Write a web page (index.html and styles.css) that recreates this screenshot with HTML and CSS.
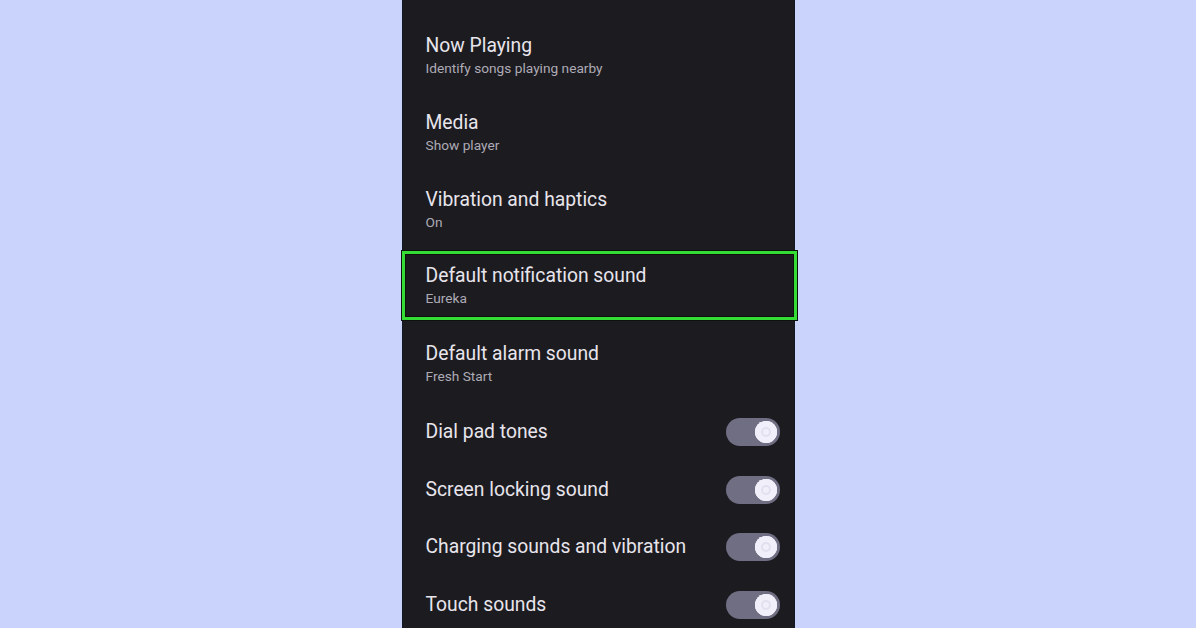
FILE: index.html
```html
<!DOCTYPE html>
<html lang="en">
<head>
  <meta charset="UTF-8" />
  <meta name="viewport" content="width=device-width, initial-scale=1.0"/>
  <title>Sound &amp; vibration</title>
  <link rel="stylesheet" href="styles.css">
</head>
<body>
  <div id="phone">
    <div class="list">
      <div class="item">
        <div class="title">Live Caption</div>
        <div class="sub">Automatically caption media</div>
      </div>
      <div class="item">
        <div class="title">Now Playing</div>
        <div class="sub">Identify songs playing nearby</div>
      </div>
      <div class="item">
        <div class="title">Media</div>
        <div class="sub">Show player</div>
      </div>
      <div class="item">
        <div class="title">Vibration and haptics</div>
        <div class="sub">On</div>
      </div>
      <div class="item selected">
        <div class="title">Default notification sound</div>
        <div class="sub">Eureka</div>
      </div>
      <div class="item">
        <div class="title">Default alarm sound</div>
        <div class="sub">Fresh Start</div>
      </div>

      <div class="item toggle-row first">
        <div class="title">Dial pad tones</div>
        <div class="switch on"><span class="thumb"></span></div>
      </div>
      <div class="item toggle-row">
        <div class="title">Screen locking sound</div>
        <div class="switch on"><span class="thumb"></span></div>
      </div>
      <div class="item toggle-row">
        <div class="title">Charging sounds and vibration</div>
        <div class="switch on"><span class="thumb"></span></div>
      </div>
      <div class="item toggle-row">
        <div class="title">Touch sounds</div>
        <div class="switch on"><span class="thumb"></span></div>
      </div>
    </div>
  </div>
</body>
</html>
```

FILE: styles.css
```css
body {
  font-family: Roboto, "Liberation Sans", Arial, sans-serif;
  background: #c9d3fb;
  color: #e9e6ee;
  margin: 0;
  padding: 0;
  height: 628px;
  overflow: hidden;
}
#phone {
  display: flow-root;
  width: 391px;
  height: 628px;
  margin: 0 auto;
  background: #1c1b20;
  box-shadow: -1px 0 0 #141824, 1px 0 0 #141824;
}
.list {
  margin-top: -60px;
}
.item {
  height: 77px;
  box-sizing: border-box;
  padding: 0 14px 0 23px;
  display: flex;
  flex-direction: column;
  justify-content: center;
  gap: 1px;
}
.title {
  font-size: 19.3px;
  line-height: 24px;
  color: #e8e5ec;
}
.sub {
  font-size: 13.7px;
  line-height: 18px;
  color: #aeabb6;
}
/* highlighted entry */
.item.selected {
  height: 69px;
  margin: 3px -3px 5px -1px;
  padding-left: 21px;
  border: 3px solid #35dc35;
  box-shadow: inset 0 0 0 1px #0d120d, 0 0 0 1px #0d120d;
}
.toggle-row {
  height: 57.7px;
  flex-direction: row;
  align-items: center;
  justify-content: space-between;
}
.toggle-row.first {
  margin-top: 1px;
}
.switch {
  width: 54px;
  height: 28px;
  border-radius: 14px;
  background: #6f6e83;
  position: relative;
}
.switch .thumb {
  position: absolute;
  top: 3px;
  right: 3px;
  width: 22px;
  height: 22px;
  border-radius: 50%;
  background: #f1eff9;
  box-shadow: inset 0 0 0 6px #f1eff9, inset 0 0 0 8px #e2e0ee;
}
```
